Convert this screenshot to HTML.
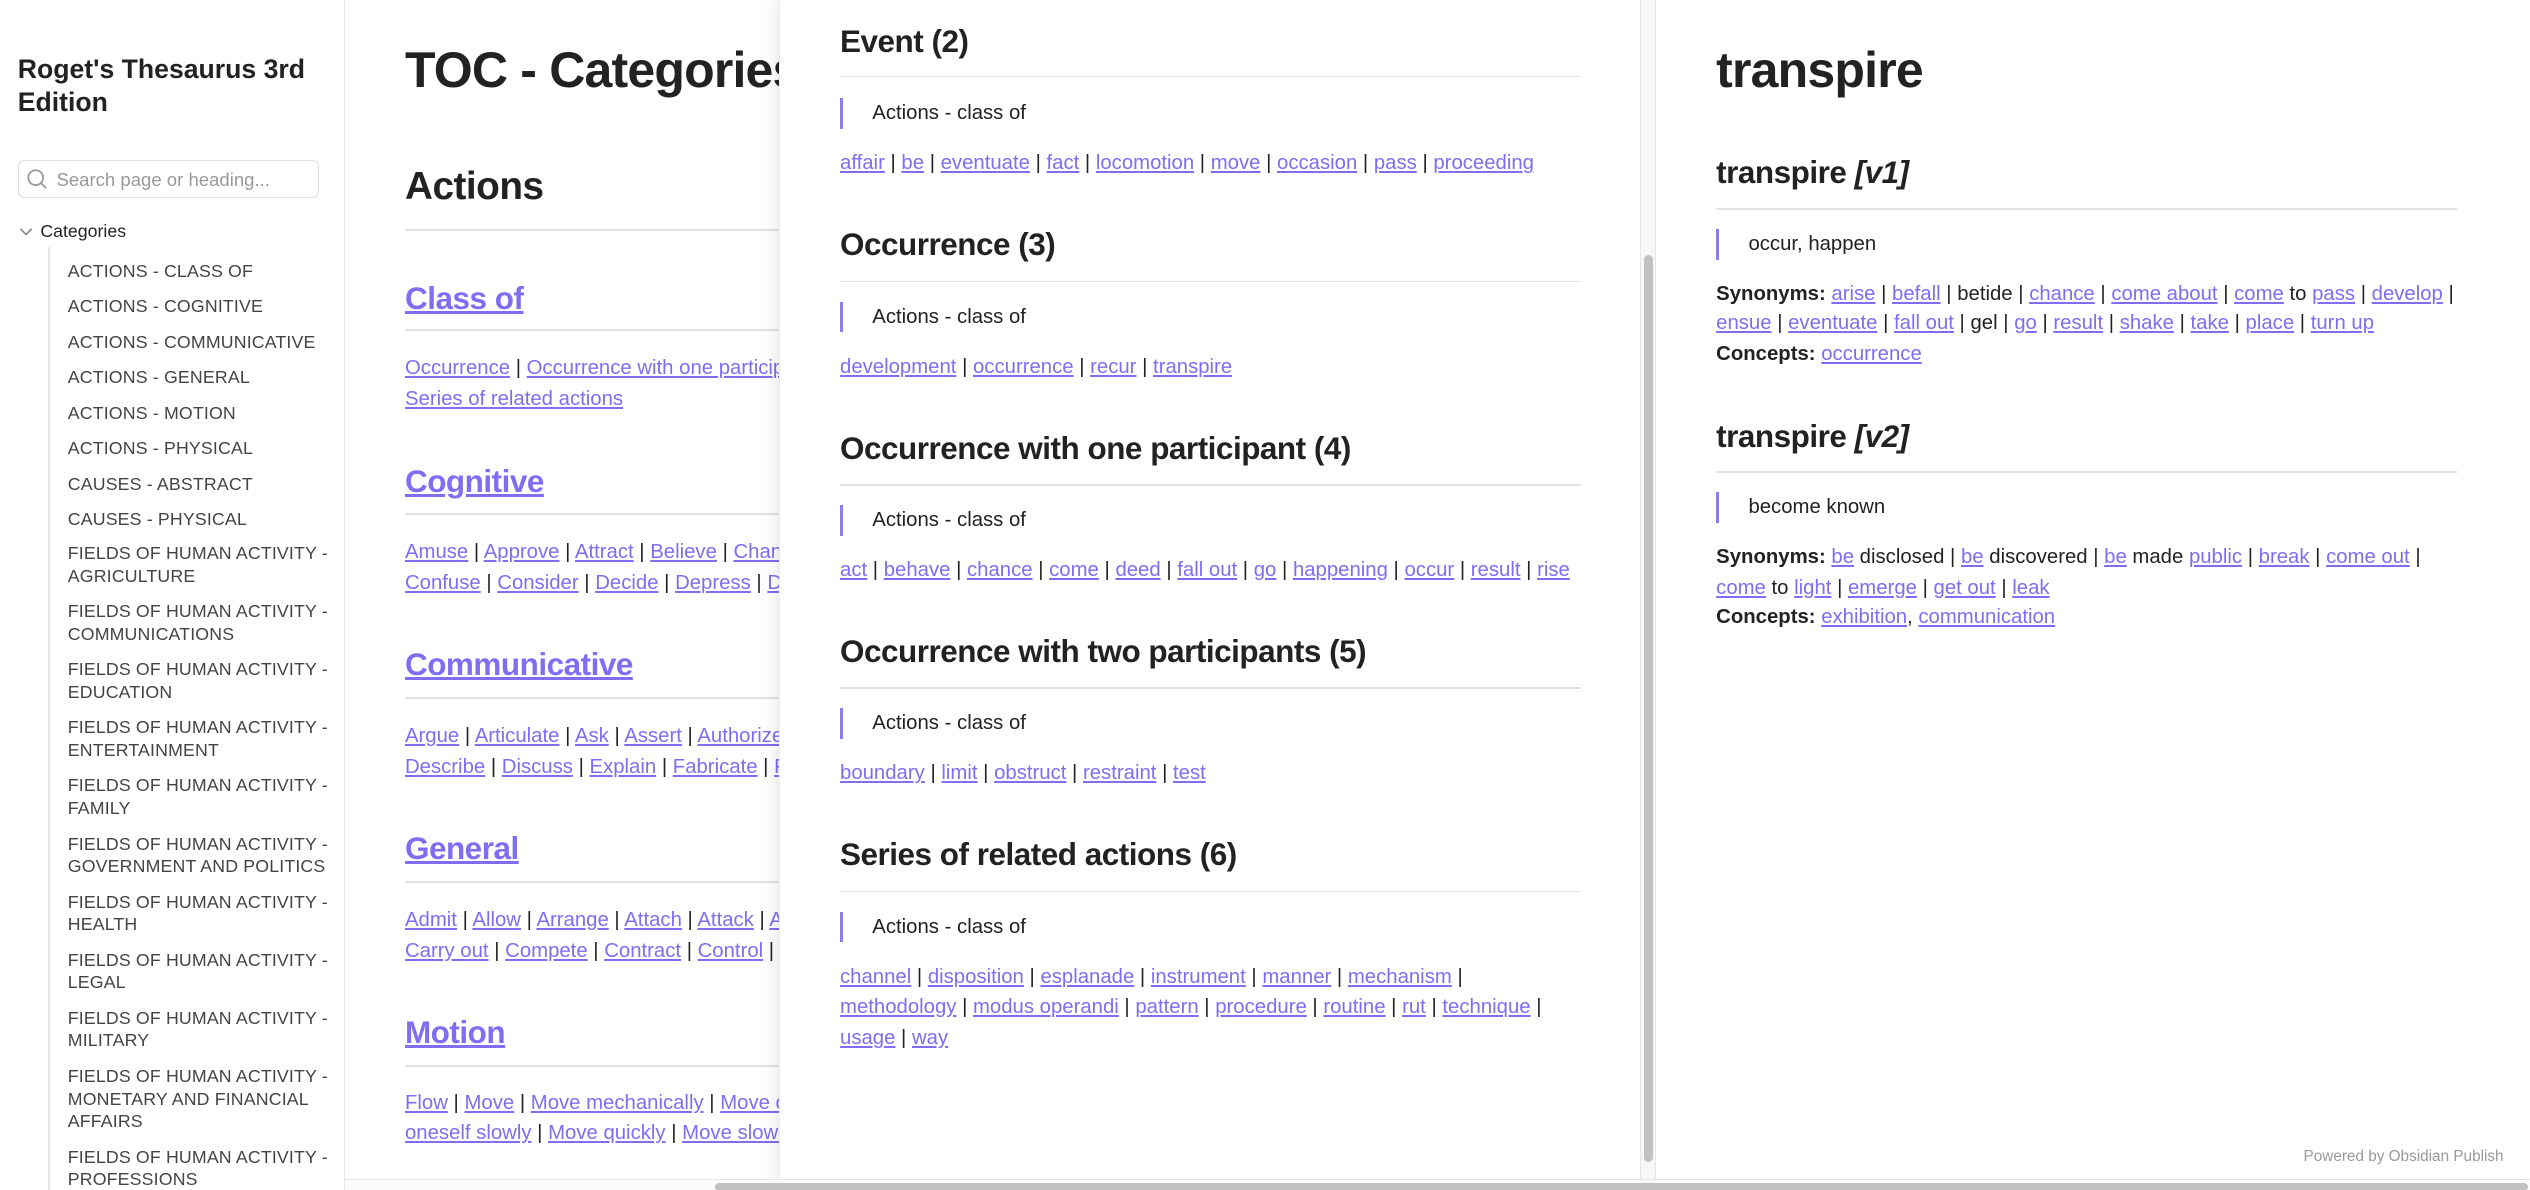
<!DOCTYPE html>
<html><head><meta charset="utf-8"><style>
html,body{margin:0;padding:0;}
html{width:2530px;height:1190px;overflow:hidden;background:#fff;}
body{zoom:1.61352;width:1568px;height:737.5px;position:relative;overflow:hidden;font-family:"Liberation Sans",Arial,sans-serif;color:#222;}
.t{position:absolute;white-space:nowrap;}
a{color:#7f6df2;text-decoration:underline;}
.side{position:absolute;left:0;top:0;width:213px;height:738px;border-right:1px solid #e6e6e6;background:#fff;}
.li{position:absolute;left:42px;font-size:11px;line-height:14px;color:#444;letter-spacing:0.1px;}
.p1{position:absolute;left:214px;top:0;width:269px;height:731px;overflow:hidden;}
.p2{position:absolute;left:483px;top:0;width:533px;height:731px;background:#fff;box-shadow:-3px 0 8px rgba(0,0,0,0.08);border-left:1px solid #ececec;}
.p3{position:absolute;left:1026px;top:0;width:542px;height:731px;background:#fff;border-left:1px solid #e6e6e6;}
.h1{font-size:31px;font-weight:bold;line-height:38px;color:#222;letter-spacing:-0.5px;}
.h2{font-size:24px;font-weight:bold;line-height:30px;letter-spacing:-0.3px;}
.h3{font-size:19.5px;font-weight:bold;line-height:26px;letter-spacing:-0.3px;}
.hr{position:absolute;height:1px;background:#e2e2e2;}
.tx{font-size:12.6px;line-height:19px;color:#222;}
.bq{position:absolute;width:2px;height:19px;background:#8b7cf0;}
</style></head><body>

<div class="side">
  <div class="t" style="left:11px;top:33px;font-size:16.5px;font-weight:bold;line-height:20px;color:#222;">Roget's Thesaurus 3rd<br>Edition</div>
  <div style="position:absolute;left:11px;top:99px;width:187px;height:24px;border:1px solid #ddd;border-radius:4px;box-sizing:border-box;"></div>
  <svg style="position:absolute;left:16px;top:104px" width="14" height="14" viewBox="0 0 14 14"><circle cx="6" cy="6" r="4.6" fill="none" stroke="#999" stroke-width="1.1"/><line x1="9.4" y1="9.4" x2="12.5" y2="12.5" stroke="#999" stroke-width="1.1"/></svg>
  <div class="t" style="left:35px;top:104px;font-size:11.5px;line-height:15px;color:#999;">Search page or heading...</div>
  <svg style="position:absolute;left:11px;top:139px" width="10" height="10" viewBox="0 0 10 10"><path d="M1.5 3 L5 6.5 L8.5 3" fill="none" stroke="#888" stroke-width="1"/></svg>
  <div class="t" style="left:25px;top:136px;font-size:11px;line-height:15px;color:#222;">Categories</div>
  <div style="position:absolute;left:30px;top:153px;width:1px;height:590px;background:#e6e6e6;"></div>
  <div class="t li" style="top:161px">ACTIONS - CLASS OF</div>
  <div class="t li" style="top:183px">ACTIONS - COGNITIVE</div>
  <div class="t li" style="top:205px">ACTIONS - COMMUNICATIVE</div>
  <div class="t li" style="top:227px">ACTIONS - GENERAL</div>
  <div class="t li" style="top:249px">ACTIONS - MOTION</div>
  <div class="t li" style="top:271px">ACTIONS - PHYSICAL</div>
  <div class="t li" style="top:293px">CAUSES - ABSTRACT</div>
  <div class="t li" style="top:315px">CAUSES - PHYSICAL</div>
  <div class="t li" style="top:336px">FIELDS OF HUMAN ACTIVITY -<br>AGRICULTURE</div>
  <div class="t li" style="top:372px">FIELDS OF HUMAN ACTIVITY -<br>COMMUNICATIONS</div>
  <div class="t li" style="top:408px">FIELDS OF HUMAN ACTIVITY -<br>EDUCATION</div>
  <div class="t li" style="top:444px">FIELDS OF HUMAN ACTIVITY -<br>ENTERTAINMENT</div>
  <div class="t li" style="top:480px">FIELDS OF HUMAN ACTIVITY -<br>FAMILY</div>
  <div class="t li" style="top:516px">FIELDS OF HUMAN ACTIVITY -<br>GOVERNMENT AND POLITICS</div>
  <div class="t li" style="top:552px">FIELDS OF HUMAN ACTIVITY -<br>HEALTH</div>
  <div class="t li" style="top:588px">FIELDS OF HUMAN ACTIVITY -<br>LEGAL</div>
  <div class="t li" style="top:624px">FIELDS OF HUMAN ACTIVITY -<br>MILITARY</div>
  <div class="t li" style="top:660px">FIELDS OF HUMAN ACTIVITY -<br>MONETARY AND FINANCIAL<br>AFFAIRS</div>
  <div class="t li" style="top:710px">FIELDS OF HUMAN ACTIVITY -<br>PROFESSIONS</div>
</div>

<div class="p1">
  <div class="t h1" style="left:37px;top:25px;">TOC - Categories</div>
  <div class="t h2" style="left:37px;top:101px;">Actions</div>
  <div class="hr" style="left:37px;top:142px;width:300px;"></div>
  <div class="t h3" style="left:37px;top:172px;"><a>Class of</a></div>
  <div class="hr" style="left:37px;top:204px;width:300px;"></div>
  <div class="t tx" style="left:37px;top:219px;"><a>Occurrence</a> | <a>Occurrence with one participant</a></div>
  <div class="t tx" style="left:37px;top:238px;"><a>Series of related actions</a></div>
  <div class="t h3" style="left:37px;top:286px;"><a>Cognitive</a></div>
  <div class="hr" style="left:37px;top:318px;width:300px;"></div>
  <div class="t tx" style="left:37px;top:333px;"><a>Amuse</a> | <a>Approve</a> | <a>Attract</a> | <a>Believe</a> | <a>Change</a></div>
  <div class="t tx" style="left:37px;top:352px;"><a>Confuse</a> | <a>Consider</a> | <a>Decide</a> | <a>Depress</a> | <a>Desire</a></div>
  <div class="t h3" style="left:37px;top:399px;"><a>Communicative</a></div>
  <div class="hr" style="left:37px;top:432px;width:300px;"></div>
  <div class="t tx" style="left:37px;top:447px;"><a>Argue</a> | <a>Articulate</a> | <a>Ask</a> | <a>Assert</a> | <a>Authorize</a></div>
  <div class="t tx" style="left:37px;top:466px;"><a>Describe</a> | <a>Discuss</a> | <a>Explain</a> | <a>Fabricate</a> | <a>Fool</a></div>
  <div class="t h3" style="left:37px;top:513px;"><a>General</a></div>
  <div class="hr" style="left:37px;top:546px;width:300px;"></div>
  <div class="t tx" style="left:37px;top:561px;"><a>Admit</a> | <a>Allow</a> | <a>Arrange</a> | <a>Attach</a> | <a>Attack</a> | <a>Avoid</a></div>
  <div class="t tx" style="left:37px;top:580px;"><a>Carry out</a> | <a>Compete</a> | <a>Contract</a> | <a>Control</a> | <a>Cut</a></div>
  <div class="t h3" style="left:37px;top:627px;"><a>Motion</a></div>
  <div class="hr" style="left:37px;top:660px;width:300px;"></div>
  <div class="t tx" style="left:37px;top:674px;"><a>Flow</a> | <a>Move</a> | <a>Move mechanically</a> | <a>Move oneself</a></div>
  <div class="t tx" style="left:37px;top:693px;"><a>oneself slowly</a> | <a>Move quickly</a> | <a>Move slowly</a></div>
</div>

<div class="p2">
  <div class="t h3" style="left:37px;top:13px;">Event (2)</div>
  <div class="hr" style="left:37px;top:47px;width:459px;"></div>
  <div class="bq" style="left:37px;top:61px;"></div>
  <div class="t tx" style="left:57px;top:61px;">Actions - class of</div>
  <div class="t tx" style="left:37px;top:92px;"><a>affair</a> | <a>be</a> | <a>eventuate</a> | <a>fact</a> | <a>locomotion</a> | <a>move</a> | <a>occasion</a> | <a>pass</a> | <a>proceeding</a></div>

  <div class="t h3" style="left:37px;top:139px;">Occurrence (3)</div>
  <div class="hr" style="left:37px;top:174px;width:459px;"></div>
  <div class="bq" style="left:37px;top:187px;"></div>
  <div class="t tx" style="left:57px;top:187px;">Actions - class of</div>
  <div class="t tx" style="left:37px;top:218px;"><a>development</a> | <a>occurrence</a> | <a>recur</a> | <a>transpire</a></div>

  <div class="t h3" style="left:37px;top:265px;">Occurrence with one participant (4)</div>
  <div class="hr" style="left:37px;top:300px;width:459px;"></div>
  <div class="bq" style="left:37px;top:313px;"></div>
  <div class="t tx" style="left:57px;top:313px;">Actions - class of</div>
  <div class="t tx" style="left:37px;top:344px;"><a>act</a> | <a>behave</a> | <a>chance</a> | <a>come</a> | <a>deed</a> | <a>fall out</a> | <a>go</a> | <a>happening</a> | <a>occur</a> | <a>result</a> | <a>rise</a></div>

  <div class="t h3" style="left:37px;top:391px;">Occurrence with two participants (5)</div>
  <div class="hr" style="left:37px;top:426px;width:459px;"></div>
  <div class="bq" style="left:37px;top:439px;"></div>
  <div class="t tx" style="left:57px;top:439px;">Actions - class of</div>
  <div class="t tx" style="left:37px;top:470px;"><a>boundary</a> | <a>limit</a> | <a>obstruct</a> | <a>restraint</a> | <a>test</a></div>

  <div class="t h3" style="left:37px;top:517px;">Series of related actions (6)</div>
  <div class="hr" style="left:37px;top:552px;width:459px;"></div>
  <div class="bq" style="left:37px;top:565px;"></div>
  <div class="t tx" style="left:57px;top:565px;">Actions - class of</div>
  <div class="t tx" style="left:37px;top:596px;"><a>channel</a> | <a>disposition</a> | <a>esplanade</a> | <a>instrument</a> | <a>manner</a> | <a>mechanism</a> |</div>
  <div class="t tx" style="left:37px;top:615px;"><a>methodology</a> | <a>modus operandi</a> | <a>pattern</a> | <a>procedure</a> | <a>routine</a> | <a>rut</a> | <a>technique</a> |</div>
  <div class="t tx" style="left:37px;top:634px;"><a>usage</a> | <a>way</a></div>

  <div style="position:absolute;left:533px;top:0;width:9px;height:731px;background:#f7f7f7;border-left:1px solid #e6e6e6;"></div>
  <div style="position:absolute;left:535px;top:158px;width:6px;height:562px;background:#c1c1c1;border-radius:3px;"></div>
</div>

<div class="p3">
  <div class="t h1" style="left:37px;top:25px;">transpire</div>
  <div class="t h3" style="left:37px;top:94px;">transpire <i>[v1]</i></div>
  <div class="hr" style="left:37px;top:129px;width:459px;"></div>
  <div class="bq" style="left:37px;top:142px;"></div>
  <div class="t tx" style="left:57px;top:142px;">occur, happen</div>
  <div class="t tx" style="left:37px;top:173px;"><b>Synonyms:</b> <a>arise</a> | <a>befall</a> | betide | <a>chance</a> | <a>come about</a> | <a>come</a> to <a>pass</a> | <a>develop</a> |</div>
  <div class="t tx" style="left:37px;top:191px;"><a>ensue</a> | <a>eventuate</a> | <a>fall out</a> | gel | <a>go</a> | <a>result</a> | <a>shake</a> | <a>take</a> | <a>place</a> | <a>turn up</a></div>
  <div class="t tx" style="left:37px;top:210px;"><b>Concepts:</b> <a>occurrence</a></div>

  <div class="t h3" style="left:37px;top:258px;">transpire <i>[v2]</i></div>
  <div class="hr" style="left:37px;top:292px;width:459px;"></div>
  <div class="bq" style="left:37px;top:305px;"></div>
  <div class="t tx" style="left:57px;top:305px;">become known</div>
  <div class="t tx" style="left:37px;top:336px;"><b>Synonyms:</b> <a>be</a> disclosed | <a>be</a> discovered | <a>be</a> made <a>public</a> | <a>break</a> | <a>come out</a> |</div>
  <div class="t tx" style="left:37px;top:355px;"><a>come</a> to <a>light</a> | <a>emerge</a> | <a>get out</a> | <a>leak</a></div>
  <div class="t tx" style="left:37px;top:373px;"><b>Concepts:</b> <a>exhibition</a>, <a>communication</a></div>

  <div class="t" style="right:17px;top:711px;font-size:9.5px;line-height:12px;color:#999;">Powered by Obsidian Publish</div>
</div>

<div style="position:absolute;left:214px;top:731px;width:1354px;height:7px;background:#fafafa;border-top:1px solid #e6e6e6;"></div>
<div style="position:absolute;left:443px;top:733px;width:1124px;height:5px;background:#c1c1c1;border-radius:3px;"></div>

</body></html>
